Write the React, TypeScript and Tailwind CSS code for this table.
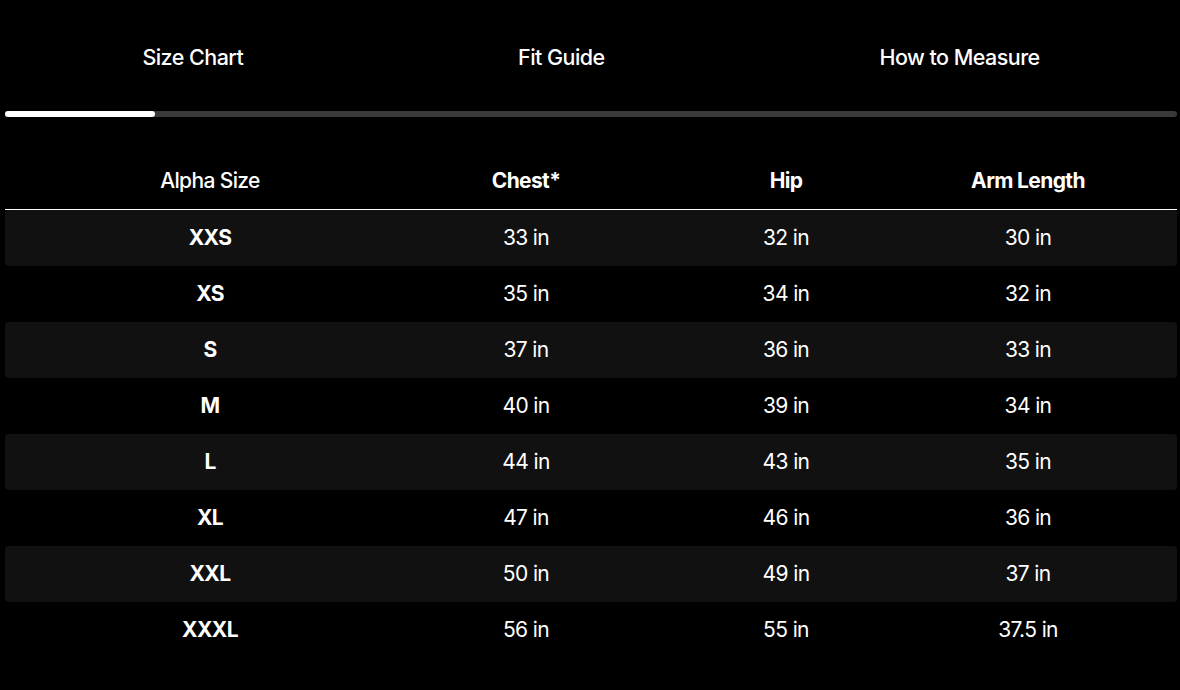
import React from "react";

const rows = [
  ["XXS", "33 in", "32 in", "30 in"],
  ["XS", "35 in", "34 in", "32 in"],
  ["S", "37 in", "36 in", "33 in"],
  ["M", "40 in", "39 in", "34 in"],
  ["L", "44 in", "43 in", "35 in"],
  ["XL", "47 in", "46 in", "36 in"],
  ["XXL", "50 in", "49 in", "37 in"],
  ["XXXL", "56 in", "55 in", "37.5 in"],
];

const tabs = ["Size Chart", "Fit Guide", "How to Measure"];

export default function App() {
  return (
    <main
      className="min-h-[690px] bg-black pl-[5px] pr-[3px] text-white"
      style={{ fontFamily: "Inter, 'Noto Sans', sans-serif" }}
    >
      {/* Tabs */}
      <div className="flex justify-around pt-[43px]">
        {tabs.map((t) => (
          <button key={t} className="text-[21.5px] leading-[28px] font-medium tracking-[-0.025em] text-white">
            {t}
          </button>
        ))}
      </div>
      <div className="mt-[40px] h-[6px] w-full rounded-full bg-[#3a3a3a]">
        <div className="h-[6px] w-[150px] rounded-full bg-white" />
      </div>

      {/* Table */}
      <div className="mt-[36px]">
        <div className="grid h-[57px] grid-cols-[410px_222px_298px_1fr] items-center border-b border-white text-[21px] tracking-[-0.03em]">
          <div className="text-center font-medium">Alpha Size</div>
          <div className="text-center font-bold">Chest*</div>
          <div className="text-center font-bold">Hip</div>
          <div className="pr-[56px] text-center font-bold">Arm Length</div>
        </div>
        {rows.map((r, i) => (
          <div
            key={r[0]}
            className={`grid h-[56px] grid-cols-[410px_222px_298px_1fr] items-center rounded-[4px] text-[21px] tracking-[-0.03em] ${
              i % 2 === 0 ? "bg-[#111111]" : "bg-black"
            }`}
          >
            <div className="text-center font-bold">{r[0]}</div>
            <div className="text-center">{r[1]}</div>
            <div className="text-center">{r[2]}</div>
            <div className="pr-[56px] text-center">{r[3]}</div>
          </div>
        ))}
      </div>
    </main>
  );
}
